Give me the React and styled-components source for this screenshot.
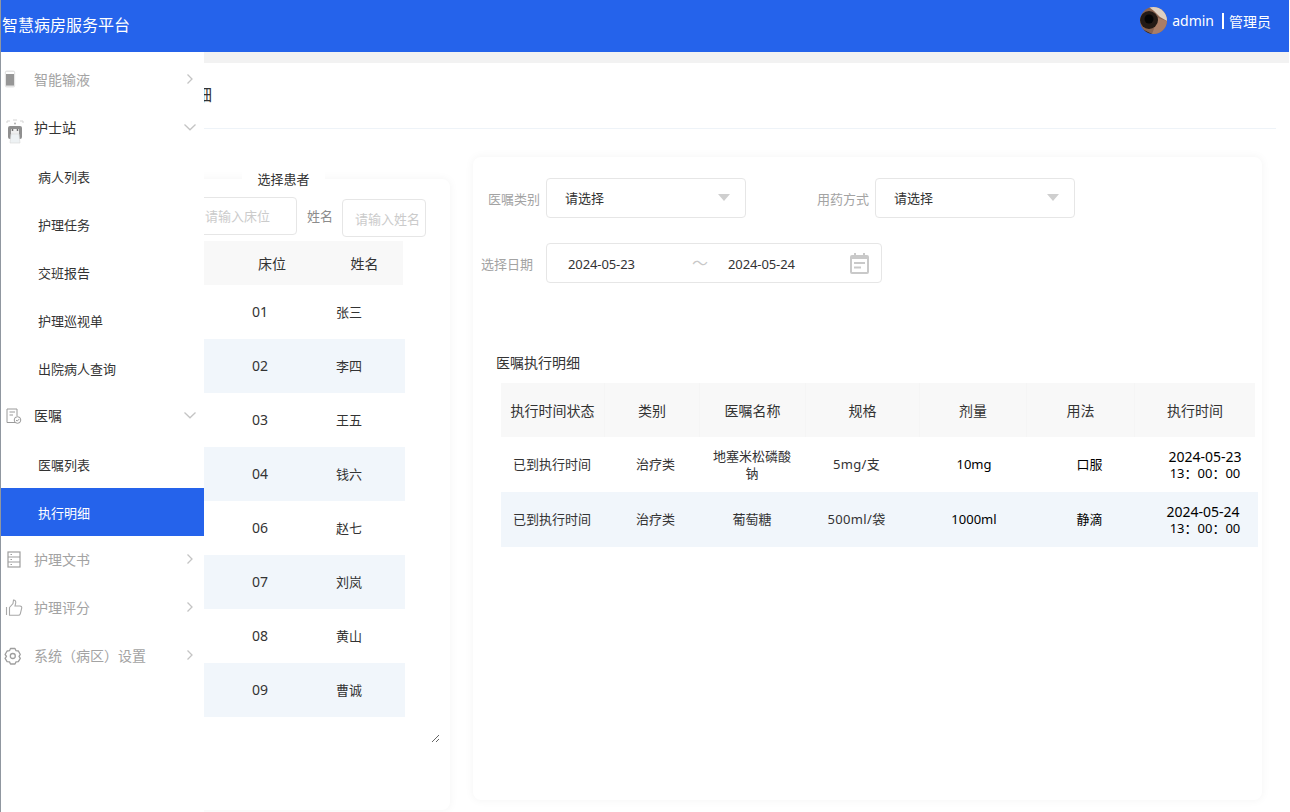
import React from "react";
import styled, { createGlobalStyle } from "styled-components";

const GlobalStyle = createGlobalStyle`
  html, body { margin: 0; padding: 0; height: 100%; background: #fff; overflow: hidden; }
  body { font-family: "Noto Sans", "Noto Sans CJK SC", sans-serif; font-size: 13px; color: #333; }
  * { box-sizing: border-box; }
`;

const Page = styled.div`
  width: 1290px; height: 812px; display: flex; flex-direction: column;
  border-left: 1px solid #9097a0; border-right: 1px solid #fff; overflow: hidden;
`;
const TopBar = styled.header`
  flex: 0 0 52px; background: #2563eb; color: #fff; display: flex;
  justify-content: space-between; padding: 0 18px 0 1px;
`;
const Brand = styled.div`font-size: 16px; line-height: 50px;`;
const UserBox = styled.div`height: 41px; display: flex; align-items: center; font-size: 14px;`;
const Avatar = styled.svg`width: 27px; height: 27px; display: block; margin-right: 5px;`;
const Divider = styled.i`width: 2px; height: 16px; background: #fff; margin: 0 5px 0 8px;`;
const Body = styled.div`flex: 1; display: flex; min-height: 0;`;

const Sidebar = styled.nav`flex: 0 0 203px; padding-top: 4px; background: #fff;`;
const MenuRow = styled.div`
  height: 48px; display: flex; align-items: center; font-size: 14px; padding: 0 8px 2px 0;
  color: ${p => (p.$open ? "#333" : "#a3a3a3")};
`;
const IconBox = styled.span`width: 33px; padding-left: 3px; display: flex; align-items: center;`;
const MenuLabel = styled.span`flex: 1;`;
const SubRow = styled.div`
  height: 48px; display: flex; align-items: center; font-size: 13px; padding: 1px 0 0 37px;
  color: ${p => (p.$active ? "#fff" : "#333")};
  background: ${p => (p.$active ? "#2563eb" : "transparent")};
`;

const Main = styled.main`flex: 1; min-width: 0; overflow: hidden; display: flex; flex-direction: column;`;
const Strip = styled.div`flex: 0 0 11px; background: #f2f2f2;`;
const TitleBar = styled.div`
  flex: 0 0 66px; margin: 0 13px 0 -56px; padding-top: 21px; font-size: 16px; line-height: 22px;
  color: #333; border-bottom: 1px solid #eef3f8;
`;
const Columns = styled.div`display: flex; align-items: flex-start; gap: 23px; margin-left: -100px;`;

const PatientCard = styled.section`
  position: relative; flex: 0 0 346px; height: 631px; margin-top: 50px; padding: 18px 0 0 10px;
  background: #fff; border-radius: 8px; box-shadow: 0 0 10px rgba(0, 0, 0, 0.05);
`;
const Legend = styled.div`
  position: absolute; top: -9px; left: 138px; width: 83px; height: 20px; background: #fff;
  font-size: 13px; line-height: 19px; text-align: center; color: #333;
`;
const FilterRow = styled.div`display: flex; height: 40px; margin-bottom: 4px; padding-left: 77px;`;
const FilterLabel = styled.span`font-size: 13px; line-height: 38px; color: #8c8c8c; margin: 0 9px 0 10px;`;
const TextInput = styled.input`
  width: ${p => p.$w}px; height: 38px; margin-top: ${p => p.$top || 0}px; padding: ${p => p.$top ? "2px 0 0 12px" : "0 0 0 13px"};
  border: 1px solid #e6e6e6; border-radius: 4px; outline: none; background: #fff;
  font: 13px "Noto Sans", "Noto Sans CJK SC", sans-serif;
  &::placeholder { color: #cbcbcb; opacity: 1; }
`;
const ListBox = styled.div`width: 326px; height: 502px; overflow: auto; resize: both;`;
const ListHead = styled.div`
  width: 289px; height: 44px; display: grid; grid-template-columns: 114px 88px 87px;
  align-items: center; background: #f8f8f8; font-size: 14px; color: #333; text-align: center;
`;
const NameHead = styled.span`padding-left: 10px; white-space: nowrap;`;
const ListRow = styled.div`
  width: 291px; height: 54px; padding-bottom: 2px; display: grid; grid-template-columns: 102px 88px 90px 11px;
  align-items: center; text-align: center; font-size: 13px; color: #333;
  background: ${p => (p.$band ? "#f1f6fb" : "#fff")};
`;
const BedNo = styled.span`font-size: 14px;`;

const OrderCard = styled.section`
  flex: 0 0 789px; height: 643px; margin-top: 28px; padding-top: 21px;
  background: #fff; border-radius: 8px; box-shadow: 0 0 10px rgba(0, 0, 0, 0.05);
`;
const FormRow = styled.div`display: flex; height: 40px; margin-bottom: 25px; padding-left: ${p => p.$pad}px;`;
const FormLabel = styled.label`
  width: 52px; margin: 0 ${p => p.$gap || 6}px 0 ${p => p.$left || 0}px; padding-top: 1px;
  font-size: 13px; line-height: 40px; color: #a3a3a3; white-space: nowrap;
`;
const Select = styled.div`
  width: 200px; height: 40px; display: flex; align-items: center; justify-content: space-between;
  padding: 0 15px 2px 18px; border: 1px solid #e6e6e6; border-radius: 4px; font-size: 13px; color: #333;
`;
const Caret = styled.i`
  width: 0; height: 0; border-left: 6px solid transparent; border-right: 6px solid transparent;
  border-top: 7px solid #cfcfcf;
`;
const DateBox = styled.div`
  width: 336px; height: 40px; display: flex; align-items: center; padding-left: 21px;
  border: 1px solid #e6e6e6; border-radius: 4px; font-size: 13px; color: #333;
`;
const DateValue = styled.span`width: ${p => p.$w}px; padding-top: 2px; white-space: nowrap; letter-spacing: -0.1px;`;
const Tilde = styled.span`width: 36px; font-size: 16px; color: #c8c8c8; line-height: 1;`;
const SectionTitle = styled.h3`
  margin: 70px 0 10px; padding-left: 23px; font-weight: 400; font-size: 14px; line-height: 20px; color: #333;
`;
const OrderTable = styled.div`margin-left: 28px;`;
const OrderHead = styled.div`
  width: 754px; height: 54px; display: grid; grid-template-columns: 104px 95px 106px 114px 107px 108px 120px;
  background: #f8f8f8; font-size: 14px; color: #333;
`;
const HeadCell = styled.div`
  display: flex; align-items: center; justify-content: center; white-space: nowrap;
  border-right: 1px solid #f5f5f5;
  &:last-child { border-right: 0; }
`;
const OrderRow = styled.div`
  width: 757px; height: 55px; display: grid; grid-template-columns: 102px 105px 88px 121px 114px 117px 110px;
  background: ${p => (p.$band ? "#f1f6fb" : "#fff")};
`;
const Cell = styled.div`
  display: flex; flex-direction: column; align-items: center; justify-content: center; text-align: center;
  padding: 0 5px; font-size: 13px; line-height: 16.5px; color: ${p => (p.$dark ? "#000" : "#333")};
`;
const SpecText = styled.span`letter-spacing: 0.35px; white-space: nowrap;`;
const TimeCell = styled(Cell)`padding: 0 0 0 4px; font-size: 13px; line-height: 17px; white-space: nowrap; color: #000;`;
const DateLine = styled.span`font-size: 14px; margin-right: ${p => p.$shift || 0}px;`;

const Chevron = ({ open }) => (
  <svg width="12" height="12" viewBox="0 0 12 12" fill="none" stroke="#c4c4c4" strokeWidth="1.3">
    {open ? <path d="M.5 3.5 6 8.8l5.500-5.300" /> : <path d="M3.500 1.500 8 6l-4.500 4.500" />}
  </svg>
);
const IconBottle = () => (
  <svg width="18" height="18" viewBox="0 0 18 18">
    <rect x=".8" y=".5" width="10.400" height="17" rx="2" fill="#e4e4e4" />
    <rect x="2" y="2" width="8" height="2" fill="#fff" />
    <rect x="2" y="4" width="8" height="11.500" fill="#969696" />
  </svg>
);
const IconNurse = () => (
  <svg width="22" height="26" viewBox="0 0 22 26" style={{ marginTop: 10 }}>
    <path d="M3 4V2h3M19 4V2h-3M9 1h4" stroke="#d4d4d4" fill="none" strokeWidth="1" />
    <circle cx="11" cy="4.500" r="1" fill="#b0b0b0" />
    <rect x="4" y="7" width="14" height="13" rx="2" fill="#8f8f8f" />
    <rect x="7" y="10" width="8" height="5" fill="#efefef" />
    <circle cx="8.500" cy="11" r=".9" fill="#666" /><circle cx="13.500" cy="11" r=".9" fill="#666" />
    <path d="M7 15h8l1 9H6z" fill="#eef2f4" stroke="#d6d6d6" strokeWidth=".6" />
  </svg>
);
const IconOrder = () => (
  <svg width="18" height="18" viewBox="0 0 18 18" fill="none" stroke="#9a9a9a" strokeWidth="1" style={{ marginLeft: 1, marginTop: 2 }}>
    <path d="M10 15.500H2V2h10v7" />
    <path d="M4.500 5h5.500M4.500 8H8" />
    <circle cx="12.500" cy="13" r="3.300" />
    <path d="m11 13 1.200 1.100 2-2" />
  </svg>
);
const IconDoc = () => (
  <svg width="18" height="18" viewBox="0 0 18 18" fill="none" stroke="#9e9e9e" strokeWidth="1.200" style={{ marginLeft: 3, marginTop: 2 }}>
    <rect x="1" y="1" width="12" height="15" />
    <path d="M1 6h12M1 11h12" />
    <path d="M3.500 3.500h1.500M3.500 8.500h1.500M3.500 13.500h1.500" />
  </svg>
);
const IconThumb = () => (
  <svg width="18" height="18" viewBox="0 0 18 18" fill="none" stroke="#a8a8a8" strokeWidth="1.100" style={{ marginLeft: 1, marginTop: 2 }}>
    <path d="M1.500 8v8" />
    <path d="M4.500 8.500 8 4.500 8.500 1c1.700 0 2.500 1.200 2.200 3L10 7h5c1.300 0 2 1 1.700 2.200l-1.400 5.600c-.3 1-1 1.500-2 1.500H4.500z" />
  </svg>
);
const IconGear = () => (
  <svg width="18" height="18" viewBox="0 0 18 18" fill="none" stroke="#9e9e9e" strokeWidth="1.300" style={{ marginTop: 2 }}>
    <path d="M6.500 1.500h4.500l1 2.200 2.400.3 1.900 3.500-1.300 1.900 1.300 2-2 3.300-2.300.2-1 2.100H6.500l-1-2.100-2.400-.2-2-3.300 1.400-2-1.400-1.900 2-3.500 2.400-.3z" strokeLinejoin="round" />
    <circle cx="8.800" cy="9" r="2.500" />
  </svg>
);
const IconCalendar = () => (
  <svg width="19" height="21" viewBox="0 0 19 21">
    <path d="M2 2h2V0h2v2h7V0h2v2h2a2 2 0 0 1 2 2v15a2 2 0 0 1-2 2H2a2 2 0 0 1-2-2V4a2 2 0 0 1 2-2z" fill="#c9c9c9" />
    <rect x="2" y="6" width="15" height="13" fill="#fff" />
    <rect x="4" y="9" width="11" height="2" fill="#c9c9c9" />
    <rect x="4" y="13.500" width="7" height="2" fill="#c9c9c9" />
  </svg>
);

const patients = [
  ["01", "张三"], ["02", "李四"], ["03", "王五"], ["04", "钱六"],
  ["06", "赵七"], ["07", "刘岚"], ["08", "黄山"], ["09", "曹诚"],
];

export default function App() {
  return (
    <Page>
      <GlobalStyle />
      <TopBar>
        <Brand>智慧病房服务平台</Brand>
        <UserBox>
          <Avatar viewBox="0 0 27 27">
            <defs><clipPath id="av"><circle cx="13.500" cy="13.500" r="13.500" /></clipPath></defs>
            <g clipPath="url(#av)">
              <rect width="27" height="27" fill="#8a6450" />
              <path d="M9 0h18v14l-7-4-6-6z" fill="#ddd0c2" />
              <path d="M18 11l9 3v13H12z" fill="#a97d66" />
              <circle cx="9" cy="13" r="9" fill="#231a15" />
              <circle cx="9" cy="12" r="4.500" fill="#050505" />
              <path d="M0 21l12 6H0z" fill="#2b211c" />
            </g>
          </Avatar>
          admin<Divider />管理员
        </UserBox>
      </TopBar>
      <Body>
        <Sidebar>
          <MenuRow><IconBox><IconBottle /></IconBox><MenuLabel>智能输液</MenuLabel><Chevron /></MenuRow>
          <MenuRow $open><IconBox><IconNurse /></IconBox><MenuLabel>护士站</MenuLabel><Chevron open /></MenuRow>
          <SubRow>病人列表</SubRow>
          <SubRow>护理任务</SubRow>
          <SubRow>交班报告</SubRow>
          <SubRow>护理巡视单</SubRow>
          <SubRow>出院病人查询</SubRow>
          <MenuRow $open><IconBox><IconOrder /></IconBox><MenuLabel>医嘱</MenuLabel><Chevron open /></MenuRow>
          <SubRow>医嘱列表</SubRow>
          <SubRow $active>执行明细</SubRow>
          <MenuRow><IconBox><IconDoc /></IconBox><MenuLabel>护理文书</MenuLabel><Chevron /></MenuRow>
          <MenuRow><IconBox><IconThumb /></IconBox><MenuLabel>护理评分</MenuLabel><Chevron /></MenuRow>
          <MenuRow><IconBox><IconGear /></IconBox><MenuLabel>系统（病区）设置</MenuLabel><Chevron /></MenuRow>
        </Sidebar>
        <Main>
          <Strip />
          <TitleBar>执行明细</TitleBar>
          <Columns>
            <PatientCard>
              <Legend>选择患者</Legend>
              <FilterRow>
                <TextInput $w={106} placeholder="请输入床位" />
                <FilterLabel>姓名</FilterLabel>
                <TextInput $w={84} $top={2} placeholder="请输入姓名" />
              </FilterRow>
              <ListBox>
                <ListHead><span /><span>床位</span><NameHead>姓名</NameHead></ListHead>
                {patients.map(([bed, name], i) => (
                  <ListRow key={bed} $band={i % 2 === 1}><span /><BedNo>{bed}</BedNo><span>{name}</span><span /></ListRow>
                ))}
              </ListBox>
            </PatientCard>
            <OrderCard>
              <FormRow $pad={15}>
                <FormLabel>医嘱类别</FormLabel>
                <Select>请选择<Caret /></Select>
                <FormLabel $left={71}>用药方式</FormLabel>
                <Select>请选择<Caret /></Select>
              </FormRow>
              <FormRow $pad={8}>
                <FormLabel $gap={13}>选择日期</FormLabel>
                <DateBox>
                  <DateValue $w={124}>2024-05-23</DateValue>
                  <Tilde>～</Tilde>
                  <DateValue $w={122}>2024-05-24</DateValue>
                  <IconCalendar />
                </DateBox>
              </FormRow>
              <SectionTitle>医嘱执行明细</SectionTitle>
              <OrderTable>
                <OrderHead>
                  {["执行时间状态", "类别", "医嘱名称", "规格", "剂量", "用法", "执行时间"].map(h => (
                    <HeadCell key={h}>{h}</HeadCell>
                  ))}
                </OrderHead>
                <OrderRow>
                  <Cell>已到执行时间</Cell>
                  <Cell>治疗类</Cell>
                  <Cell>地塞米松磷酸钠</Cell>
                  <Cell><SpecText>5mg/支</SpecText></Cell>
                  <Cell $dark>10mg</Cell>
                  <Cell $dark>口服</Cell>
                  <TimeCell><DateLine>2024-05-23</DateLine><span>13：00：00</span></TimeCell>
                </OrderRow>
                <OrderRow $band>
                  <Cell>已到执行时间</Cell>
                  <Cell>治疗类</Cell>
                  <Cell>葡萄糖</Cell>
                  <Cell><SpecText>500ml/袋</SpecText></Cell>
                  <Cell $dark>1000ml</Cell>
                  <Cell $dark>静滴</Cell>
                  <TimeCell><DateLine $shift={4}>2024-05-24</DateLine><span>13：00：00</span></TimeCell>
                </OrderRow>
              </OrderTable>
            </OrderCard>
          </Columns>
        </Main>
      </Body>
    </Page>
  );
}
